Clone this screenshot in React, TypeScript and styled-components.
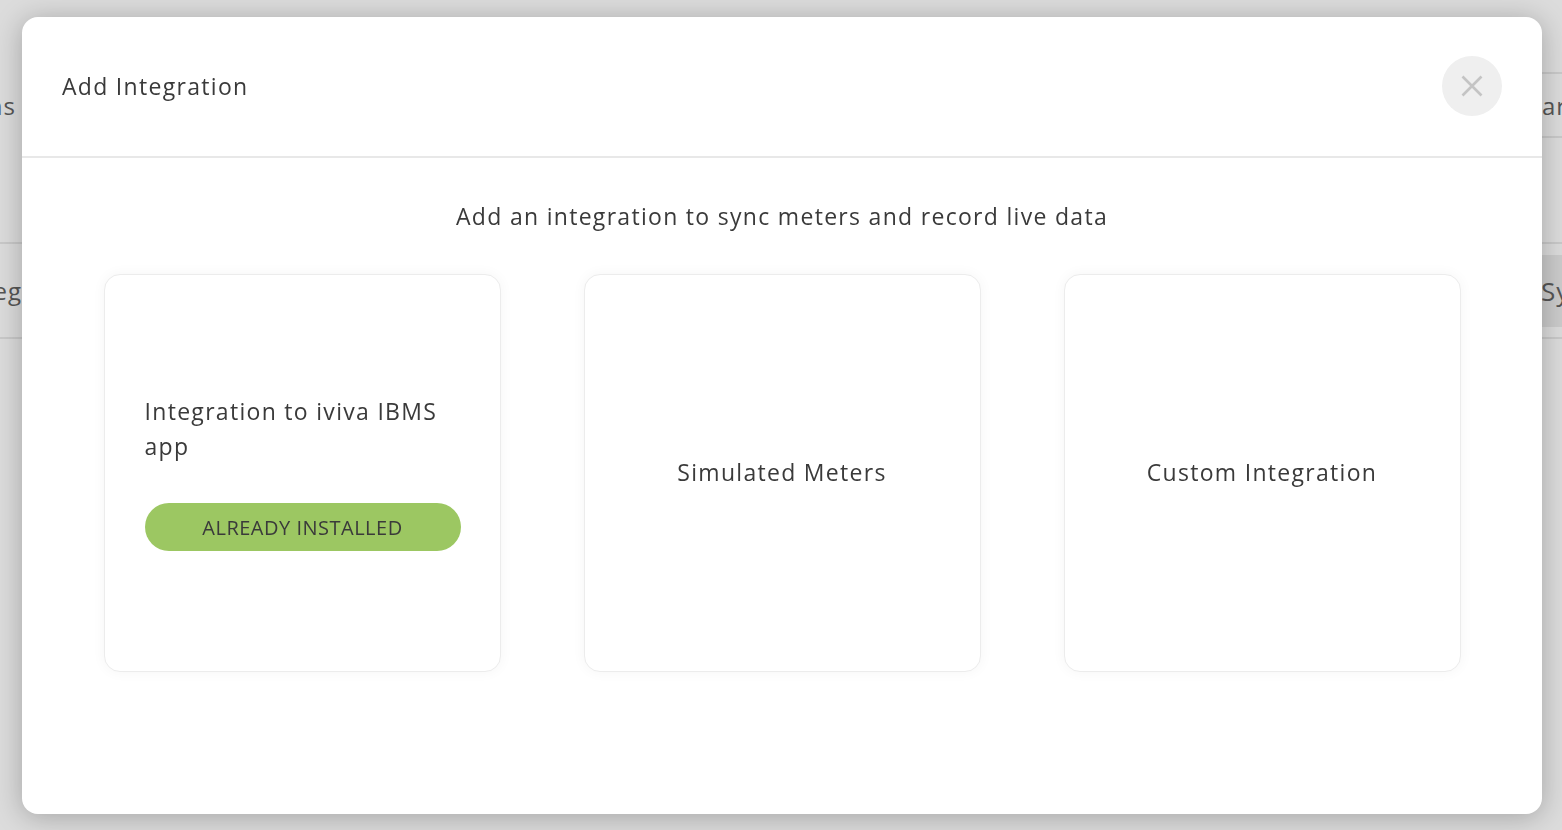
import React from "react";
import styled, { createGlobalStyle } from "styled-components";

const GlobalStyle = createGlobalStyle`
  html, body {
    margin: 0;
    padding: 0;
    width: 1562px;
    height: 830px;
    overflow: hidden;
    font-family: "Open Sans", "Noto Sans", sans-serif;
  }
  * { box-sizing: border-box; }
`;

/* ---------- background page (dimmed, behind modal) ---------- */

const Page = styled.div`
  width: 1562px;
  height: 830px;
  display: flex;
  background: #dcdcdc;
  color: #555555;
`;

const PageColumn = styled.div`
  flex: 1;
  display: flex;
  flex-direction: column;
`;

const PageRow = styled.div<{ $h: number; $lined?: boolean; $shade?: boolean; $end?: boolean }>`
  height: ${(p) => p.$h}px;
  flex-shrink: 0;
  display: flex;
  align-items: center;
  justify-content: ${(p) => (p.$end ? "flex-end" : "flex-start")};
  border-bottom: ${(p) => (p.$lined ? "2px solid #c9c9c9" : "none")};
  background: ${(p) => (p.$shade ? "#cbcbcb" : "transparent")};
`;

const ClipText = styled.div<{ $w: number; $end?: boolean; $size: number }>`
  width: ${(p) => p.$w}px;
  overflow: hidden;
  white-space: nowrap;
  display: flex;
  justify-content: ${(p) => (p.$end ? "flex-end" : "flex-start")};
  font-size: ${(p) => p.$size}px;
  letter-spacing: 1px;
  flex-shrink: 0;
`;

/* ---------- modal ---------- */

const Overlay = styled.div`
  position: fixed;
  inset: 0;
  display: flex;
  align-items: center;
  justify-content: center;
  padding-left: 2px;
`;

const Modal = styled.div`
  width: 1520px;
  height: 797px;
  background: #ffffff;
  border-radius: 16px;
  box-shadow: 0 3px 28px rgba(0, 0, 0, 0.26);
  display: flex;
  flex-direction: column;
  overflow: hidden;
`;

const Header = styled.div`
  height: 141px;
  flex-shrink: 0;
  display: flex;
  align-items: center;
  justify-content: space-between;
  padding: 0 40px;
  border-bottom: 2px solid #e8e8e8;
`;

const Title = styled.h2`
  margin: 0;
  font-size: 23px;
  font-weight: 400;
  color: #3a3a3a;
  letter-spacing: 1.3px;
`;

const CloseButton = styled.button`
  width: 60px;
  height: 60px;
  border-radius: 50%;
  border: none;
  background: #efefef;
  display: flex;
  align-items: center;
  justify-content: center;
  padding: 0;
  cursor: pointer;
`;

const Body = styled.div`
  flex: 1;
  display: flex;
  flex-direction: column;
  align-items: center;
  padding-top: 42px;
`;

const Subtitle = styled.p`
  margin: 0;
  font-size: 23px;
  line-height: 33px;
  color: #3a3a3a;
  letter-spacing: 1.3px;
`;

const Cards = styled.div`
  margin-top: 41px;
  display: grid;
  grid-template-columns: repeat(3, 397px);
  column-gap: 83px;
`;

const Card = styled.div<{ $left?: boolean }>`
  height: 398px;
  border: 1px solid #ececec;
  border-radius: 16px;
  background: #ffffff;
  box-shadow: 0 0 14px rgba(0, 0, 0, 0.045);
  display: flex;
  flex-direction: column;
  justify-content: center;
  align-items: ${(p) => (p.$left ? "flex-start" : "center")};
  padding: 0 40px;
`;

const CardTitle = styled.div`
  font-size: 23px;
  line-height: 35px;
  color: #3a3a3a;
  letter-spacing: 1.3px;
`;

const InstalledBadge = styled.div`
  margin-top: 39px;
  width: 316px;
  height: 48px;
  border-radius: 24px;
  background: #9cc762;
  color: #3a3a3a;
  font-size: 20px;
  display: flex;
  align-items: center;
  justify-content: center;
  letter-spacing: 0.5px;
`;

const CloseIcon = () => (
  <svg width="22" height="22" viewBox="0 0 22 22" fill="none">
    <path d="M1.5 1.5L20.5 20.5M20.5 1.5L1.5 20.5" stroke="#c4c4c4" strokeWidth="2.6" />
  </svg>
);

export default function App() {
  return (
    <>
      <GlobalStyle />
      <Page>
        <PageColumn>
          <PageRow $h={210}>
            <ClipText $w={16} $end $size={24}>Integrations</ClipText>
          </PageRow>
          <PageRow $h={34} $lined />
          <PageRow $h={95} $lined>
            <ClipText $w={22} $end $size={24}>Integ</ClipText>
          </PageRow>
        </PageColumn>
        <PageColumn>
          <PageRow $h={74} $lined />
          <PageRow $h={64} $lined $end>
            <ClipText $w={20} $size={24}>arch</ClipText>
          </PageRow>
          <PageRow $h={106} $lined />
          <PageRow $h={11} />
          <PageRow $h={72} $shade $end>
            <ClipText $w={21} $size={26}>Sync</ClipText>
          </PageRow>
          <PageRow $h={12} $lined />
        </PageColumn>
      </Page>
      <Overlay>
        <Modal>
          <Header>
            <Title>Add Integration</Title>
            <CloseButton aria-label="Close">
              <CloseIcon />
            </CloseButton>
          </Header>
          <Body>
            <Subtitle>Add an integration to sync meters and record live data</Subtitle>
            <Cards>
              <Card $left>
                <CardTitle>Integration to iviva IBMS app</CardTitle>
                <InstalledBadge>ALREADY INSTALLED</InstalledBadge>
              </Card>
              <Card>
                <CardTitle>Simulated Meters</CardTitle>
              </Card>
              <Card>
                <CardTitle>Custom Integration</CardTitle>
              </Card>
            </Cards>
          </Body>
        </Modal>
      </Overlay>
    </>
  );
}
